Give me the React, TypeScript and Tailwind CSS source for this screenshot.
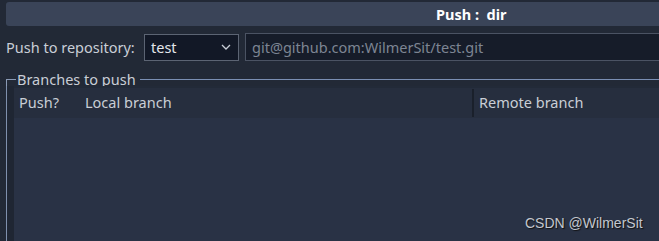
export default function App() {
  return (
    <div className="relative w-[659px] h-[241px] overflow-hidden bg-[#222936] text-[14.5px] text-[#c9ced6] font-['Noto_Sans','Open_Sans',sans-serif]">
      {/* title bar */}
      <div className="ml-[6px] mt-[2px] h-[24px] rounded-l-[3px] bg-[#3a4458] flex items-center pl-[430px]">
        <span className="font-bold text-white leading-none">Push :&nbsp; dir</span>
      </div>

      {/* repository row */}
      <div className="mt-[7px] flex items-center h-[28px]">
        <span className="pl-[6px] w-[144px] leading-none">Push to repository:</span>
        <div className="w-[95px] h-[27px] border border-[#5c6473] bg-[#121826] flex items-center justify-between pl-[6px] pr-[6px]">
          <span className="text-[#e3e6ea] leading-none">test</span>
          <svg width="10" height="6" viewBox="0 0 10 6" className="mr-[1px]">
            <path d="M1 1 L5 5 L9 1" fill="none" stroke="#c9ced6" strokeWidth="1.3" />
          </svg>
        </div>
        <div className="ml-[6px] flex-1 h-[28px] border-y border-l border-[#4b5363] bg-[#161c29] flex items-center pl-[6px]">
          <span className="text-[#7d8593] leading-none">git@github.com:WilmerSit/test.git</span>
        </div>
      </div>

      {/* group box: Branches to push */}
      <div className="mt-[11px] flex h-[14px]">
        <div className="ml-[6px] w-[10px] h-[7px] self-end border-l border-t border-[#8a9ab5]" />
        <span className="px-[1px] leading-[14px]">Branches to push</span>
        <div className="ml-[3px] flex-1 h-[7px] self-end border-t border-[#7a8fb3]" />
      </div>
      <div className="flex h-[160px]">
        <div className="ml-[6px] w-px bg-[#7f90ad]" />
        <div className="w-[7px] bg-[#1f2633]" />
        <div className="flex-1 flex flex-col">
          <div className="h-[2px] bg-[#222a38]" />
          <div className="h-[30px] bg-[#262e3e] flex items-center">
            <span className="pl-[5px] w-[71px]">Push?</span>
            <span className="w-[387px]">Local branch</span>
            <div className="w-[2px] h-[28px] bg-[#1a202b]" />
            <span className="pl-[5px]">Remote branch</span>
          </div>
          <div className="flex-1 bg-[#293245]" />
        </div>
      </div>

      {/* watermark */}
      <span className="absolute left-[525px] top-[213px] text-[14px] text-[#c3c7ce] font-['Liberation_Sans',sans-serif] [text-shadow:1px_1px_1px_#111]">
        CSDN @WilmerSit
      </span>
    </div>
  );
}
